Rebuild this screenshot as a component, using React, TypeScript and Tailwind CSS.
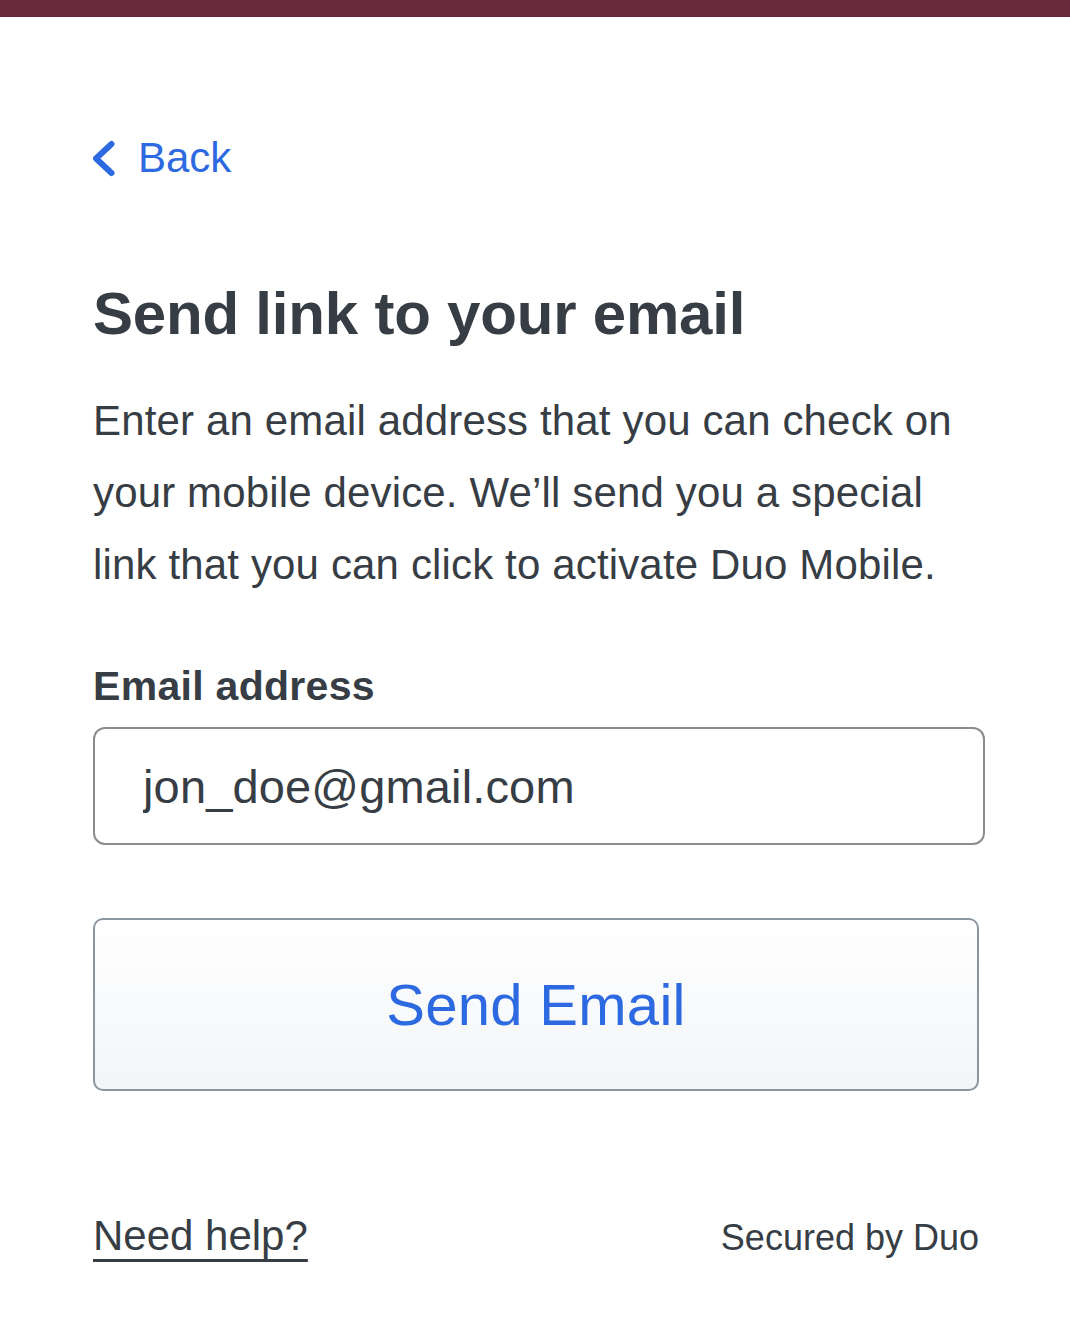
import React from "react";

const font = { fontFamily: '"Liberation Sans", Arial, Helvetica, sans-serif' };

const ChevronLeft: React.FC = () => (
  <svg width="26" height="38" viewBox="0 0 26 38" fill="none" aria-hidden="true">
    <path
      d="M18.5 5 L3 19.5 L18.5 34"
      stroke="#2d69e0"
      strokeWidth="6"
      strokeLinecap="round"
      strokeLinejoin="round"
    />
  </svg>
);

const App: React.FC = () => (
  <div className="min-h-[1338px] w-[1070px] bg-white text-[#373d44]" style={font}>
    {/* brand bar */}
    <div className="h-[17px] bg-[#682b3c]" />

    <div className="pl-[93px] pr-[85px] pt-[120px]">
      <a href="#" className="flex items-center gap-[19px] text-[#2d69e0]">
        <ChevronLeft />
        <span className="text-[42px] leading-[42px]">Back</span>
      </a>

      <h1 className="mt-[105px] text-[60px] leading-[60px] font-bold tracking-[-0.2px]">
        Send link to your email
      </h1>

      <p className="mt-[41px] text-[42px] leading-[72px] tracking-[0.15px]">
        Enter an email address that you can check on your mobile device. We’ll send you a special
        link that you can click to activate Duo Mobile.
      </p>

      <label
        htmlFor="email"
        className="mt-[65px] block text-[41px] leading-[41px] font-bold tracking-[0.3px]"
      >
        Email address
      </label>

      <input
        id="email"
        type="email"
        readOnly
        value="jon_doe@gmail.com"
        className="mt-[20px] block h-[118px] w-[892px] rounded-[12px] border-2 border-[#8c8c8c] bg-white pl-[48px] text-[47px] tracking-[0.15px] text-[#373d44] outline-none"
        style={font}
      />

      <button
        type="button"
        className="mt-[73px] flex h-[173px] w-[886px] items-center justify-center rounded-[10px] border-2 border-[#8b96a1] bg-linear-to-b from-white to-[#f3f5f8] text-[58px] tracking-[0.3px] text-[#2d69e0]"
        style={font}
      >
        Send Email
      </button>

      <div className="mt-[124px] flex w-[886px] items-baseline justify-between">
        <a
          href="#"
          className="text-[42px] leading-[42px] underline decoration-[3px] underline-offset-[9px]"
        >
          Need help?
        </a>
        <span className="text-[36px] leading-[36px]">Secured by Duo</span>
      </div>
    </div>
  </div>
);

export default App;
